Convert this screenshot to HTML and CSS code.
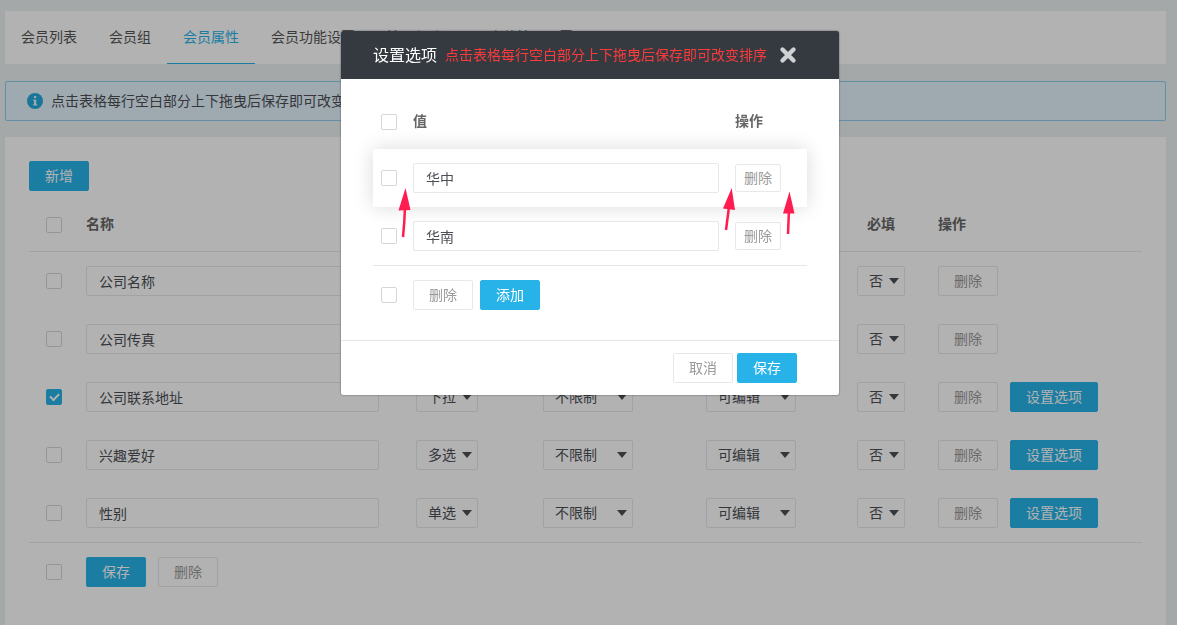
FILE: index.html
```html
<!DOCTYPE html>
<html lang="zh-CN">
<head>
<meta charset="utf-8">
<title>会员属性</title>
<link rel="stylesheet" href="styles.css">
</head>
<body>
<nav class="tabs">
  <a class="tab" href="#">会员列表</a>
  <a class="tab" href="#">会员组</a>
  <a class="tab active" href="#">会员属性</a>
  <a class="tab" href="#">会员功能设置</a>
  <a class="tab" href="#">注册与登录</a>
  <a class="tab" href="#">充值接口设置</a>
</nav>
<div class="alert">
  <svg class="info" viewBox="0 0 16 16" aria-hidden="true"><circle cx="8" cy="8" r="8" fill="#25a9dd"/><path d="M7 3h2.2v2H7zM6.2 6.4h3v4.8h1V12.600H6.200V11.200H7V7.800h-.8z" fill="#e6f4fb"/></svg>
  <span class="alert-text">点击表格每行空白部分上下拖曳后保存即可改变排序</span>
</div>
<main class="panel">
  <button class="btn primary" type="button">新增</button>
  <table class="grid main-grid">
    <colgroup><col class="c-check"><col><col class="c-type"><col class="c-limit"><col class="c-edit"><col class="c-need"><col class="c-act"></colgroup>
    <thead>
      <tr><th class="check"><input type="checkbox" aria-label="全选"></th><th>名称</th><th>类型</th><th>限制</th><th>编辑</th><th><span class="need">必填</span></th><th>操作</th></tr>
    </thead>
    <tbody>
      <tr>
        <td class="check"><input type="checkbox" aria-label="选择公司名称"></td>
        <td class="name"><input class="field" type="text" aria-label="名称" value="公司名称"></td>
        <td><span class="pick w62"><select aria-label="类型"><option>文本</option></select></span></td>
        <td><span class="pick w90"><select aria-label="限制"><option>不限制</option></select></span></td>
        <td><span class="pick w90"><select aria-label="编辑"><option>可编辑</option></select></span></td>
        <td><span class="pick w48"><select aria-label="必填"><option>否</option></select></span></td>
        <td><div class="actions"><button class="btn" type="button">删除</button></div></td>
      </tr>
      <tr>
        <td class="check"><input type="checkbox" aria-label="选择公司传真"></td>
        <td class="name"><input class="field" type="text" aria-label="名称" value="公司传真"></td>
        <td><span class="pick w62"><select aria-label="类型"><option>文本</option></select></span></td>
        <td><span class="pick w90"><select aria-label="限制"><option>不限制</option></select></span></td>
        <td><span class="pick w90"><select aria-label="编辑"><option>可编辑</option></select></span></td>
        <td><span class="pick w48"><select aria-label="必填"><option>否</option></select></span></td>
        <td><div class="actions"><button class="btn" type="button">删除</button></div></td>
      </tr>
      <tr>
        <td class="check"><input type="checkbox" aria-label="选择公司联系地址" checked></td>
        <td class="name"><input class="field" type="text" aria-label="名称" value="公司联系地址"></td>
        <td><span class="pick w62"><select aria-label="类型"><option>下拉</option></select></span></td>
        <td><span class="pick w90"><select aria-label="限制"><option>不限制</option></select></span></td>
        <td><span class="pick w90"><select aria-label="编辑"><option>可编辑</option></select></span></td>
        <td><span class="pick w48"><select aria-label="必填"><option>否</option></select></span></td>
        <td><div class="actions"><button class="btn" type="button">删除</button><button class="btn primary" type="button">设置选项</button></div></td>
      </tr>
      <tr>
        <td class="check"><input type="checkbox" aria-label="选择兴趣爱好"></td>
        <td class="name"><input class="field" type="text" aria-label="名称" value="兴趣爱好"></td>
        <td><span class="pick w62"><select aria-label="类型"><option>多选</option></select></span></td>
        <td><span class="pick w90"><select aria-label="限制"><option>不限制</option></select></span></td>
        <td><span class="pick w90"><select aria-label="编辑"><option>可编辑</option></select></span></td>
        <td><span class="pick w48"><select aria-label="必填"><option>否</option></select></span></td>
        <td><div class="actions"><button class="btn" type="button">删除</button><button class="btn primary" type="button">设置选项</button></div></td>
      </tr>
      <tr>
        <td class="check"><input type="checkbox" aria-label="选择性别"></td>
        <td class="name"><input class="field" type="text" aria-label="名称" value="性别"></td>
        <td><span class="pick w62"><select aria-label="类型"><option>单选</option></select></span></td>
        <td><span class="pick w90"><select aria-label="限制"><option>不限制</option></select></span></td>
        <td><span class="pick w90"><select aria-label="编辑"><option>可编辑</option></select></span></td>
        <td><span class="pick w48"><select aria-label="必填"><option>否</option></select></span></td>
        <td><div class="actions"><button class="btn" type="button">删除</button><button class="btn primary" type="button">设置选项</button></div></td>
      </tr>
    </tbody>
    <tfoot>
      <tr><td class="check"><input type="checkbox" aria-label="全选"></td><td colspan="6"><div class="actions"><button class="btn primary" type="button">保存</button><button class="btn" type="button">删除</button></div></td></tr>
    </tfoot>
  </table>
</main>
<div class="overlay">
  <section class="modal" role="dialog" aria-labelledby="modal-title">
    <header class="modal-head">
      <h1 id="modal-title">设置选项</h1>
      <span class="warn">点击表格每行空白部分上下拖曳后保存即可改变排序</span>
      <button class="close" type="button" aria-label="关闭"><svg viewBox="0 0 18 18" aria-hidden="true"><path d="M3.500 3.500L14.500 14.500M14.500 3.500L3.500 14.500" stroke="#cfd1d3" stroke-width="4.400" stroke-linecap="round" fill="none"/></svg></button>
    </header>
    <div class="modal-body">
      <table class="grid option-grid">
        <colgroup><col class="o-check"><col><col class="o-act"></colgroup>
        <thead><tr><th class="check"><input type="checkbox" aria-label="全选"></th><th>值</th><th>操作</th></tr></thead>
        <tbody>
          <tr class="dragging"><td class="check"><input type="checkbox" aria-label="选择华中"></td><td class="value"><input class="field" type="text" aria-label="值" value="华中"></td><td><button class="btn small" type="button">删除</button></td></tr>
          <tr><td class="check"><input type="checkbox" aria-label="选择华南"></td><td class="value"><input class="field" type="text" aria-label="值" value="华南"></td><td><button class="btn small" type="button">删除</button></td></tr>
        </tbody>
        <tfoot><tr><td class="check"><input type="checkbox" aria-label="全选"></td><td colspan="2"><div class="actions tight"><button class="btn" type="button">删除</button><button class="btn primary" type="button">添加</button></div></td></tr></tfoot>
      </table>
    </div>
    <footer class="modal-foot"><button class="btn" type="button">取消</button><button class="btn primary" type="button">保存</button></footer>
    <svg class="arrows" viewBox="0 0 400 50" aria-hidden="true">
      <g fill="#ff1c50"><path d="M15.500 1L8.500 23.500L20.500 23Z"/><path d="M341.700 1L333 21.500L345 23Z"/><path d="M399.500 4.500L393 26.500L404.500 26.500Z"/></g>
      <g stroke="#ff1c50" stroke-width="2.500" fill="none"><path d="M15 20Q14.500 36 13 50"/><path d="M339 20L336 43"/><path d="M399 22L398 47"/></g>
    </svg>
  </section>
</div>
</body>
</html>
```

FILE: styles.css
```css
* { box-sizing: border-box; }

body {
  margin: 0;
  min-height: 100vh;
  padding: 11px 11px 0 5px;
  display: flex;
  flex-direction: column;
  background: #ecf1f2;
  color: #4c4f55;
  font: 14px/20px "Noto Sans CJK SC", sans-serif;
}

button, input, select { font: inherit; color: inherit; }

.tabs { display: flex; height: 53px; background: #fff; overflow: hidden; }
.tab {
  padding: 15px 16px 0;
  color: #555;
  text-decoration: none;
  white-space: nowrap;
  border-bottom: 1px solid transparent;
}
.tab.active { color: #27b3e8; border-color: #27b3e8; }

.alert {
  display: flex;
  align-items: center;
  gap: 8px;
  height: 40px;
  margin: 17px 0 16px;
  padding: 0 21px;
  border: 1px solid #8fcdee;
  border-radius: 2px;
  background: #e4f4fd;
}
.info { width: 16px; height: 16px; }
.alert-text { padding-bottom: 2px; }

.panel { flex: 1; padding: 24px; background: #fff; }

.btn {
  height: 30px;
  min-width: 60px;
  padding: 0 15px 2px;
  border: 1px solid #e6e8ea;
  border-radius: 2px;
  background: #fff;
  color: #999;
  line-height: 20px;
  white-space: nowrap;
}
.btn.primary { border-color: #27b3e8; background: #27b3e8; color: #fff; }
.btn.small { height: 28px; min-width: 46px; padding: 0 7px 2px; }

.grid { width: 100%; border-collapse: separate; border-spacing: 0; table-layout: fixed; }
.grid th, .grid td { height: 58px; padding: 0; text-align: left; vertical-align: middle; }
.grid th { padding-bottom: 2px; font-weight: bold; color: #666; }
.grid .check { padding-left: 17px; }
.grid th.check { padding-top: 2px; padding-bottom: 0; }

.main-grid { margin-top: 6px; }
.main-grid th { height: 55px; border-bottom: 1px solid #e9e9e9; }
.main-grid tfoot td { height: 59px; border-top: 1px solid #e9e9e9; }
.c-check { width: 57px; }
.c-type { width: 127px; }
.c-limit { width: 163px; }
.c-edit { width: 151px; }
.c-need { width: 81px; }
.c-act { width: 204px; }
.grid .name { padding-right: 37px; }
.need { padding-left: 10px; }
.actions { display: flex; gap: 12px; }
.actions.tight { gap: 7px; }

input[type="checkbox"] {
  appearance: none;
  display: grid;
  place-items: center;
  width: 16px;
  height: 16px;
  margin: 0;
  border: 1px solid #d6d6d6;
  border-radius: 2px;
  background: #fff;
}
input[type="checkbox"]:checked { border-color: #27b3e8; background: #27b3e8; }
input[type="checkbox"]:checked::after {
  content: "";
  width: 7px;
  height: 4px;
  margin-bottom: 2px;
  border: solid #fff;
  border-width: 0 0 2px 2px;
  transform: rotate(-45deg);
}

.field {
  display: block;
  width: 100%;
  height: 30px;
  padding: 0 12px;
  border: 1px solid #e6e8ea;
  border-radius: 2px;
  background: #fff;
}

.pick { position: relative; display: block; height: 30px; }
.pick select {
  appearance: none;
  width: 100%;
  height: 30px;
  padding: 0 11px 2px;
  border: 1px solid #e6e8ea;
  border-radius: 2px;
  background: #fff;
}
.pick::after {
  content: "";
  position: absolute;
  top: 12px;
  right: 6px;
  border: solid transparent;
  border-width: 6px 5px 0;
  border-top-color: #4c4f55;
  pointer-events: none;
}
.w48 { width: 48px; }
.w62 { width: 62px; }
.w90 { width: 90px; }

.overlay {
  position: fixed;
  inset: 0;
  display: flex;
  justify-content: center;
  align-items: flex-start;
  padding: 31px 0 0 3px;
  background: rgba(0, 0, 0, .3);
}
.modal {
  position: relative;
  width: 498px;
  max-width: 100%;
  border-radius: 2px;
  background: #fff;
  box-shadow: 0 0 2px rgba(0, 0, 0, .6);
}
.modal-head {
  display: flex;
  align-items: center;
  gap: 8px;
  height: 48px;
  padding: 0 32px;
  border-radius: 2px 2px 0 0;
  background: #353a41;
}
.modal-head h1 { margin: 0; padding-bottom: 2px; font-size: 16px; font-weight: normal; color: #fff; }
.warn { padding-bottom: 2px; color: #fb3b3b; white-space: nowrap; }
.close { display: flex; margin-left: 4px; padding: 0; border: 0; background: none; }
.close svg { width: 18px; height: 18px; }

.modal-body { padding: 14px 32px 16px; border-bottom: 1px solid #e6e6e6; }
.o-check { width: 40px; }
.o-act { width: 72px; }
.option-grid .check { padding-left: 8px; }
.option-grid th { height: 56px; }
.option-grid .value { padding-right: 16px; }
.option-grid tfoot td { height: 59px; border-top: 1px solid #e6e6e6; }
.dragging { box-shadow: 0 0 20px rgba(0, 0, 0, .15); }

.modal-foot { display: flex; justify-content: flex-end; gap: 4px; padding: 12px 42px 12px 32px; }

.arrows { position: absolute; top: 156px; left: 49px; width: 400px; height: 50px; overflow: visible; }
```
